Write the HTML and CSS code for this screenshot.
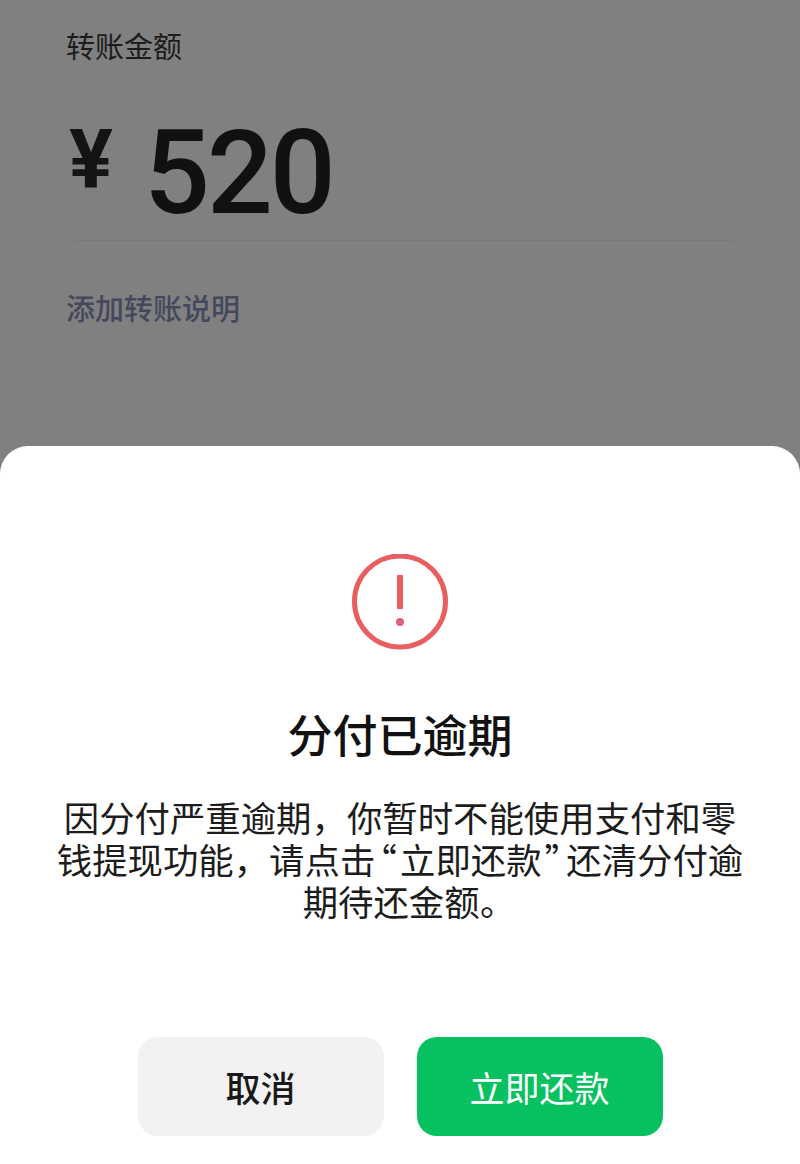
FILE: index.html
```html
<!DOCTYPE html>
<html lang="zh-CN">
<head>
<meta charset="utf-8">
<title>分付已逾期</title>
<link rel="stylesheet" href="styles.css">
</head>
<body>
<main class="screen">
  <section class="transfer">
    <div class="label">转账金额</div>
    <div class="amount"><span class="currency">¥</span><span class="value">520</span></div>
    <div class="divider"></div>
    <div class="note">添加转账说明</div>
  </section>
  <section class="sheet">
    <svg class="alert" width="96" height="96" viewBox="0 0 96 96" aria-hidden="true">
      <circle cx="48" cy="47.5" r="45.5" fill="none" stroke="#e95f5f" stroke-width="5"/>
      <rect x="45" y="21" width="6" height="34" fill="#e95f5f"/>
      <circle cx="48" cy="68" r="4" fill="#e0607a"/>
    </svg>
    <h1 class="title">分付已逾期</h1>
    <p class="message">因分付严重逾期，你暂时不能使用支付和零<br>钱提现功能，请点击<span class="narrow quote">“</span>立即还款<span class="narrow quote">”</span>还清分付逾<br>期待还金额<span class="narrow">。</span></p>
    <div class="actions">
      <button class="btn btn-cancel">取消</button>
      <button class="btn btn-pay">立即还款</button>
    </div>
  </section>
</main>
</body>
</html>
```

FILE: styles.css
```css
* { box-sizing: border-box; }
html, body { margin: 0; padding: 0; }
body {
  width: 800px;
  height: 1164px;
  overflow: hidden;
  background: #808080;
  font-family: "Noto Sans CJK SC", "Noto Sans", sans-serif;
}
.screen { display: flex; flex-direction: column; height: 1164px; }
.transfer { flex: none; height: 446px; padding: 26px 66px 0; color: #141414; }
.label { font-size: 29px; line-height: 38px; color: #1c1c1c; }
.amount { display: flex; align-items: flex-start; margin-top: 41px; height: 132px; }
.currency {
  font-family: Roboto, sans-serif;
  font-weight: 700;
  font-size: 82px;
  line-height: 96px;
  width: 78px;
  padding-left: 3px;
  margin-top: 6px;
}
.value {
  font-family: Roboto, sans-serif;
  font-weight: 500;
  font-size: 116px;
  line-height: 136px;
  letter-spacing: -3px;
  color: #111;
}
.divider { height: 1px; background: #7a7a7a; margin-top: 3px; margin-left: 8px; }
.note { margin-top: 47px; font-size: 29px; line-height: 38px; font-weight: 500; color: #45485c; }
.sheet {
  flex: 1;
  min-height: 0;
  background: #fff;
  border-radius: 28px 28px 0 0;
  display: flex;
  flex-direction: column;
  align-items: center;
  padding-top: 108px;
}
.alert { display: block; }
.title {
  margin: 53px 0 0;
  font-size: 45px;
  line-height: 62px;
  font-weight: 500;
  color: #111;
}
.message {
  margin: 31px 0 0;
  width: 720px;
  text-align: center;
  font-size: 35.4px;
  line-height: 42px;
  color: #1c1c1c;
}
.narrow { font-feature-settings: "palt"; }
.quote { margin: 0 3.5px; }
.actions { display: flex; gap: 33px; margin-top: 115px; }
.btn {
  width: 246px;
  height: 99px;
  border: 0;
  border-radius: 20px;
  font-family: inherit;
  font-size: 35px;
  padding: 0;
}
.btn-cancel { background: #f2f2f2; color: #191919; font-weight: 500; }
.btn-pay { background: #07c160; color: #fff; }
```
